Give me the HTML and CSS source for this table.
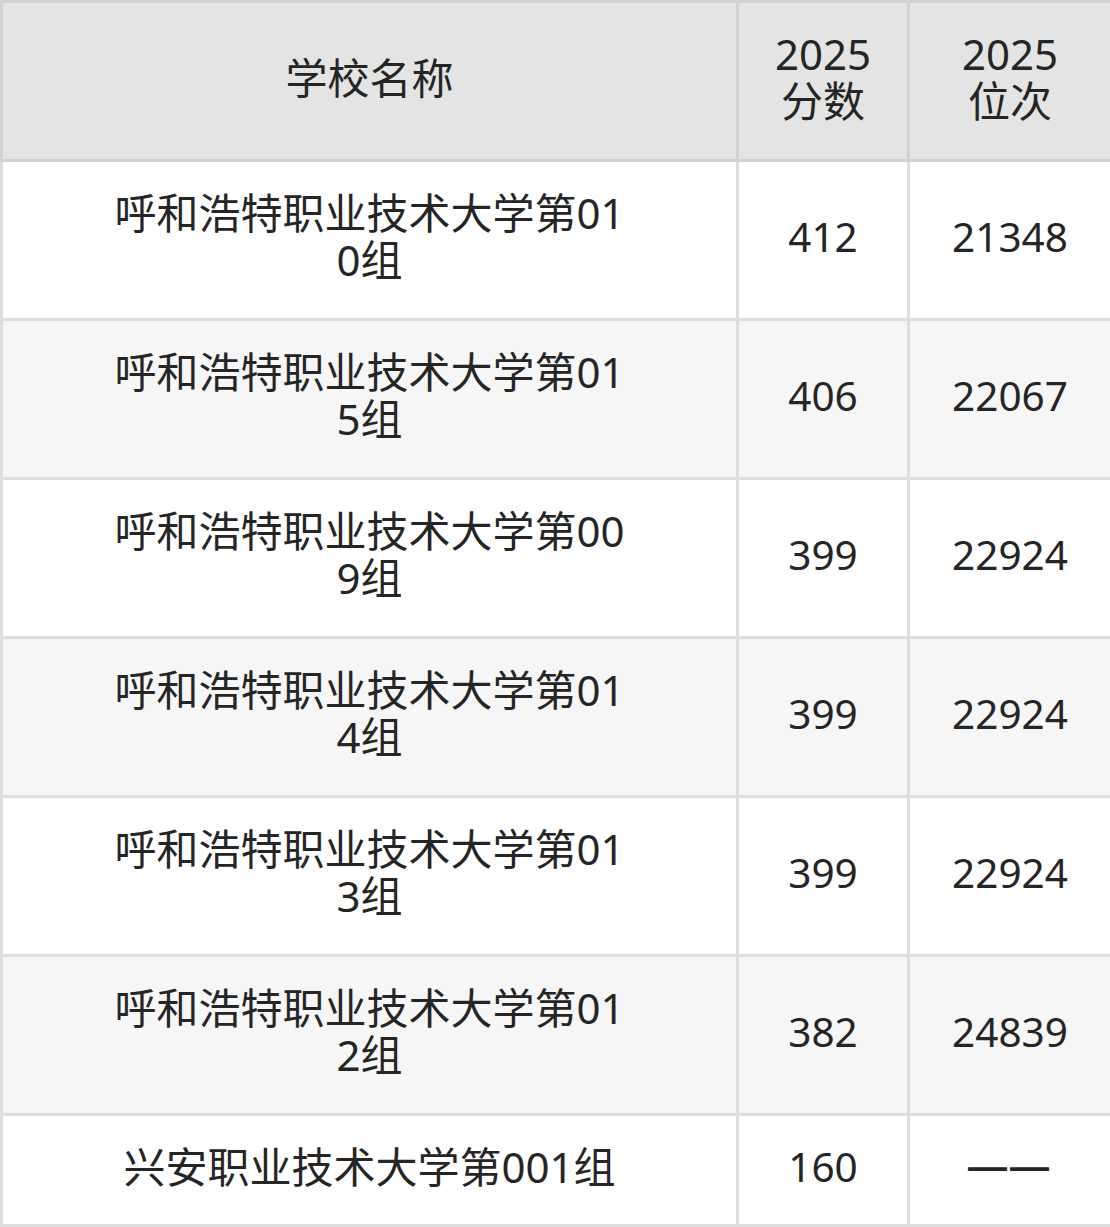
FILE: index.html
```html
<!DOCTYPE html>
<html lang="zh-CN">
<head>
<meta charset="utf-8">
<title>2025 分数与位次</title>
<link rel="stylesheet" href="styles.css">
</head>
<body>
<table class="score-table">
  <colgroup>
    <col class="col-name">
    <col class="col-score">
    <col class="col-rank">
  </colgroup>
  <thead>
    <tr>
      <th class="name">学校名称</th>
      <th>2025<br>分数</th>
      <th>2025<br>位次</th>
    </tr>
  </thead>
  <tbody>
    <tr>
      <td class="name">呼和浩特职业技术大学第010组</td>
      <td class="num">412</td>
      <td class="num">21348</td>
    </tr>
    <tr class="alt">
      <td class="name">呼和浩特职业技术大学第015组</td>
      <td class="num">406</td>
      <td class="num">22067</td>
    </tr>
    <tr>
      <td class="name">呼和浩特职业技术大学第009组</td>
      <td class="num">399</td>
      <td class="num">22924</td>
    </tr>
    <tr class="alt">
      <td class="name">呼和浩特职业技术大学第014组</td>
      <td class="num">399</td>
      <td class="num">22924</td>
    </tr>
    <tr>
      <td class="name">呼和浩特职业技术大学第013组</td>
      <td class="num">399</td>
      <td class="num">22924</td>
    </tr>
    <tr class="alt">
      <td class="name">呼和浩特职业技术大学第012组</td>
      <td class="num">382</td>
      <td class="num">24839</td>
    </tr>
    <tr class="last">
      <td class="name">兴安职业技术大学第001组</td>
      <td class="num">160</td>
      <td class="dash">——</td>
    </tr>
  </tbody>
</table>
</body>
</html>
```
FILE: styles.css
```css
html, body {
  margin: 0;
  padding: 0;
  background: #ffffff;
}

.score-table {
  width: 1110px;
  table-layout: fixed;
  border-collapse: collapse;
  border: 3px solid #d6d6d6;
  font-family: "Noto Sans", "Noto Sans CJK SC", sans-serif;
  font-size: 42px;
  line-height: 47px;
  color: #252525;
}

.col-name { width: 736px; }
.col-score { width: 171px; }
.col-rank { width: 203px; }

.score-table th,
.score-table td {
  text-align: center;
  vertical-align: middle;
  padding: 0 0 8px;
  height: 159px;
  box-sizing: border-box;
}

.score-table th {
  background: #e4e4e4;
  font-weight: normal;
  border: 3px solid #d2d2d2;
}

.score-table td {
  border: 3px solid #dedede;
  background: #ffffff;
}

.score-table td.name,
.score-table th.name {
  padding: 0 105px 8px;
  word-break: break-all;
}

.score-table td.num {
  font-size: 40.5px;
}

.score-table tr.alt td {
  background: #f6f6f6;
}

.score-table tr.last td {
  height: 111px;
}

.score-table td.dash {
  font-family: "Liberation Sans", sans-serif;
  font-size: 39px;
  letter-spacing: 3px;
  font-weight: bold;
}
```
